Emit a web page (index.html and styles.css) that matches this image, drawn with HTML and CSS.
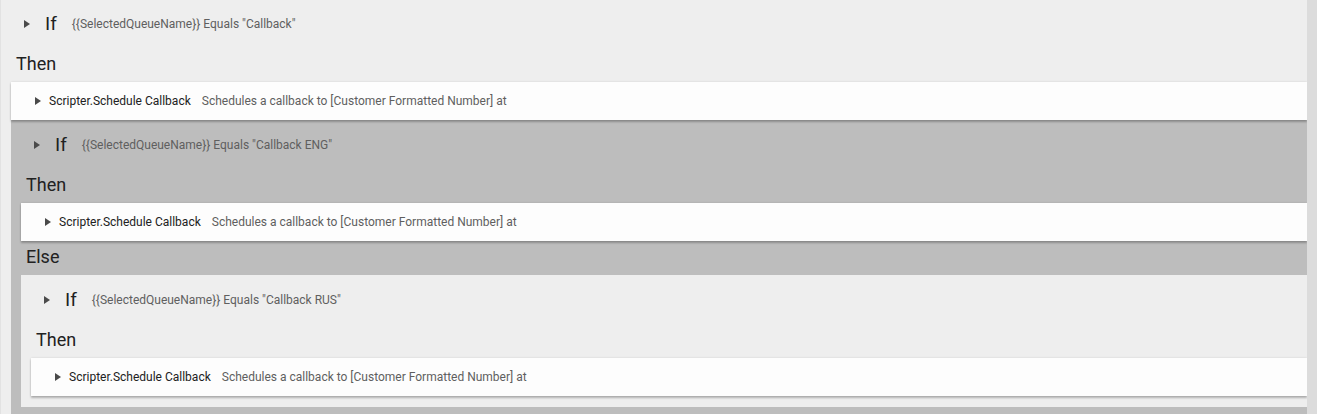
FILE: index.html
```html
<!DOCTYPE html>
<html>
<head>
<meta charset="utf-8">
<link rel="stylesheet" href="styles.css">
</head>
<body>
<div class="app">
  <div class="panel">
    <div class="block light top">
      <div class="if-row"><span class="caret"></span><span class="kw">If</span><span class="cond">{{SelectedQueueName}} Equals "Callback"</span></div>
      <div class="label">Then</div>
      <div class="items">
        <div class="card"><span class="caret"></span><span class="title">Scripter.Schedule Callback</span><span class="desc">Schedules a callback to [Customer Formatted Number] at</span></div>
        <div class="block gray">
          <div class="if-row"><span class="caret"></span><span class="kw">If</span><span class="cond">{{SelectedQueueName}} Equals "Callback ENG"</span></div>
          <div class="label">Then</div>
          <div class="items">
            <div class="card"><span class="caret"></span><span class="title">Scripter.Schedule Callback</span><span class="desc">Schedules a callback to [Customer Formatted Number] at</span></div>
          </div>
          <div class="label">Else</div>
          <div class="items">
            <div class="block light">
              <div class="if-row"><span class="caret"></span><span class="kw">If</span><span class="cond">{{SelectedQueueName}} Equals "Callback RUS"</span></div>
              <div class="label">Then</div>
              <div class="items">
                <div class="card"><span class="caret"></span><span class="title">Scripter.Schedule Callback</span><span class="desc">Schedules a callback to [Customer Formatted Number] at</span></div>
              </div>
            </div>
          </div>
        </div>
      </div>
    </div>
  </div>
  <div class="track"></div>
</div>
</body>
</html>
```
FILE: styles.css
```css
html, body {
  margin: 0;
  padding: 0;
  height: 100%;
  overflow: hidden;
  background: #eeeeee;
}
body {
  font-family: Roboto, "Liberation Sans", Arial, sans-serif;
  color: #212121;
}
.app {
  display: flex;
  height: 414px;
  border-left: 1px solid #e2e2e2;
}
.panel {
  flex: 1;
  min-width: 0;
  overflow: hidden;
  background: #eeeeee;
}
.track {
  width: 10px;
  flex: none;
  background: #dcdcdc;
}
.block {
  padding-bottom: 11px;
}
.block.top {
  margin-top: -1px;
}
.light {
  background: #eeeeee;
}
.gray {
  background: #bdbdbd;
}
.if-row {
  height: 49px;
  display: flex;
  align-items: center;
  padding-left: 23px;
}
.caret {
  width: 0;
  height: 0;
  border-top: 4px solid transparent;
  border-bottom: 4px solid transparent;
  border-left: 6px solid #4a4a4a;
  flex: none;
}
.kw {
  font-size: 19px;
  margin-left: 15px;
  line-height: 20px;
}
.cond {
  font-size: 12px;
  color: #5f5f5f;
  margin-left: 15px;
}
.label {
  font-size: 18px;
  line-height: 21px;
  padding: 5px 0 8px 15px;
}
.items {
  margin-left: 10px;
}
.card {
  height: 38px;
  display: flex;
  align-items: center;
  padding-left: 24px;
  background: #fdfdfd;
  box-shadow: 0 2px 2px rgba(0,0,0,0.25), 0 0 2px rgba(0,0,0,0.12);
  position: relative;
  z-index: 1;
  font-size: 12px;
}
.card .title {
  margin-left: 8px;
  color: #212121;
}
.card .desc {
  margin-left: 11px;
  color: #5f5f5f;
}
```
